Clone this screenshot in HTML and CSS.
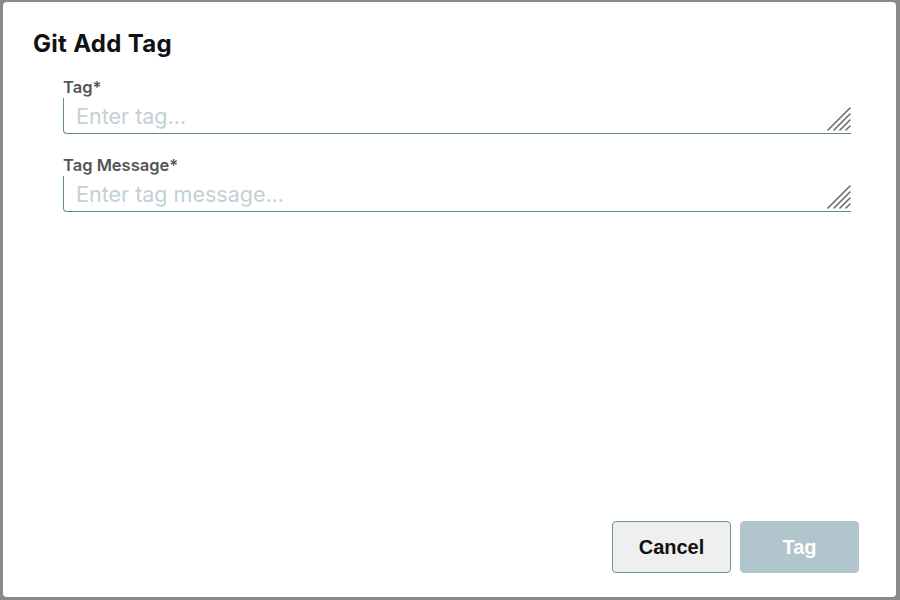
FILE: index.html
```html
<!DOCTYPE html>
<html>
<head>
<meta charset="utf-8">
<link rel="stylesheet" href="styles.css">
</head>
<body>
<div class="dialog">
  <h2 class="title">Git Add Tag</h2>
  <div class="fields">
    <label class="field">
      <span class="label">Tag*</span>
      <span class="box">
        <textarea class="input" rows="1" placeholder="Enter tag..."></textarea>
        <svg class="grip" width="24" height="25" viewBox="0 0 24 25"><g stroke="#6a6a6a" stroke-width="1.6" stroke-linecap="round" fill="none"><path d="M1 24 L23 2"/><path d="M7 24 L23 8"/><path d="M13 24 L23 14"/><path d="M19 24 L23 20"/></g></svg>
      </span>
    </label>
    <label class="field">
      <span class="label">Tag Message*</span>
      <span class="box">
        <textarea class="input" rows="1" placeholder="Enter tag message..."></textarea>
        <svg class="grip" width="24" height="25" viewBox="0 0 24 25"><g stroke="#6a6a6a" stroke-width="1.6" stroke-linecap="round" fill="none"><path d="M1 24 L23 2"/><path d="M7 24 L23 8"/><path d="M13 24 L23 14"/><path d="M19 24 L23 20"/></g></svg>
      </span>
    </label>
  </div>
  <div class="actions">
    <button class="btn cancel">Cancel</button>
    <button class="btn primary" disabled>Tag</button>
  </div>
</div>
</body>
</html>
```

FILE: styles.css
```css
html, body {
  margin: 0;
  padding: 0;
  height: 100%;
}
body {
  background: #8a8a8a;
  padding: 2px 4px 3px 3px;
  box-sizing: border-box;
  font-family: Inter, "Noto Sans", sans-serif;
}
.dialog {
  background: #fff;
  border-radius: 4px;
  height: 100%;
  box-sizing: border-box;
  display: flex;
  flex-direction: column;
  padding: 28px 37px 24px 30px;
}
.title {
  margin: 0;
  font-size: 24px;
  font-weight: 700;
  color: #111;
  line-height: 28px;
  letter-spacing: 0.3px;
}
.fields {
  display: flex;
  flex-direction: column;
  gap: 21px;
  margin: 19px 8px 0 30px;
}
.field {
  display: flex;
  flex-direction: column;
}
.label {
  font-size: 16.5px;
  font-weight: 600;
  color: #555;
  line-height: 21px;
}
.box {
  position: relative;
  display: flex;
}
.input {
  flex: 1;
  border: none;
  border-left: 1px solid #5f8b97;
  border-bottom: 1px solid #5f8b97;
  border-bottom-left-radius: 4px;
  font-family: Inter, "Noto Sans", sans-serif;
  font-size: 21.5px;
  line-height: 26px;
  padding: 5px 12px 4px;
  height: 36px;
  box-sizing: border-box;
  outline: none;
  color: #333;
  resize: none;
  margin: 0;
  overflow: hidden;
}
.input::placeholder {
  color: #c2d1d5;
}
.grip {
  position: absolute;
  right: 0;
  bottom: 3px;
  pointer-events: none;
}
.actions {
  margin-top: auto;
  display: flex;
  justify-content: flex-end;
  gap: 9px;
}
.btn {
  width: 119px;
  height: 52px;
  border-radius: 4px;
  font-family: "Liberation Sans", Arial, sans-serif;
  font-size: 20px;
  font-weight: 700;
}
.cancel {
  background: #efefef;
  border: 1px solid #6b949f;
  color: #111;
}
.primary {
  background: #b0c6cc;
  border: 1px solid #b0c6cc;
  color: #fff;
}
```
